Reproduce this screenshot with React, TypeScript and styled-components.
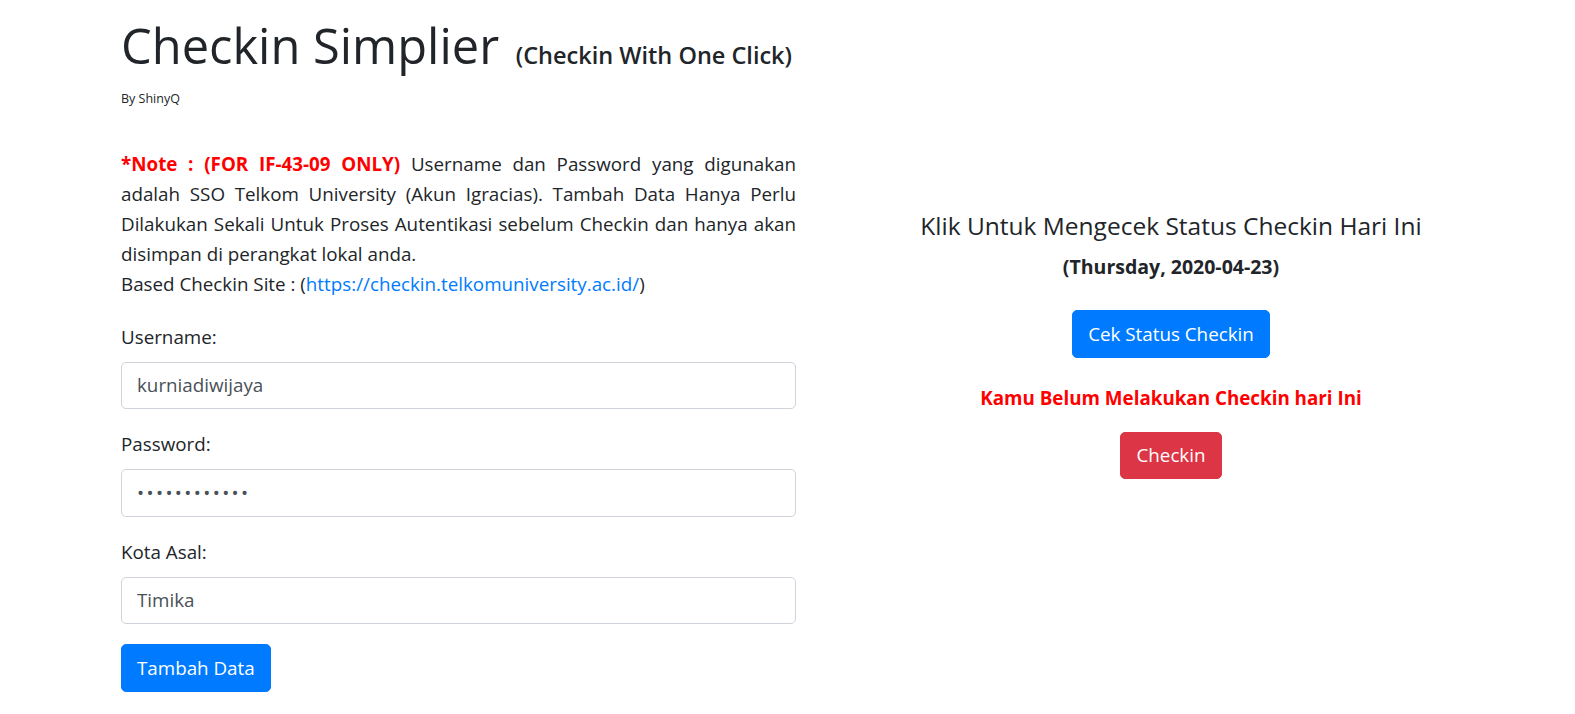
import React from 'react';
import styled, { createGlobalStyle } from 'styled-components';

const GlobalStyle = createGlobalStyle`
  html, body {
    margin: 0;
    padding: 0;
    background: #ffffff;
  }
  body {
    font-family: "Open Sans", "Noto Sans", sans-serif;
    font-size: 18.8px;
    line-height: 30px;
    color: #212529;
  }
  * {
    box-sizing: border-box;
  }
`;

const Page = styled.main`
  padding: 15px 0 0 121px;
`;

const Title = styled.h1`
  margin: 0 0 3px;
  font-size: 48.8px;
  font-weight: 500;
  line-height: 60px;
  color: #212529;
`;

const Subtitle = styled.span`
  font-size: 23.5px;
  font-weight: 600;
  margin-left: 4px;
`;

const Byline = styled.div`
  font-size: 12.5px;
  line-height: 22.5px;
`;

const Row = styled.div`
  display: flex;
  gap: 37.5px;
  margin-top: 38px;
`;

const Column = styled.section`
  width: 675px;
  flex: none;
`;

const StatusColumn = styled(Column)`
  display: flex;
  flex-direction: column;
  align-items: center;
  padding-top: 62px;
  text-align: center;
`;

const Note = styled.div`
  margin-bottom: 23px;
`;

const NoteLine = styled.div<{ $justify?: boolean }>`
  white-space: nowrap;
  text-align: justify;
  text-align-last: ${(p) => (p.$justify ? 'justify' : 'left')};
`;

const Alert = styled.strong`
  color: #ff0000;
  font-weight: 700;
`;

const Link = styled.a`
  color: #007bff;
  text-decoration: none;
`;

const Group = styled.div`
  margin-bottom: 20px;
`;

const Label = styled.label`
  display: block;
  margin-bottom: 10px;
`;

const Input = styled.input`
  display: block;
  width: 100%;
  height: 47.5px;
  padding: 7.5px 15px;
  font-family: inherit;
  font-size: 18.8px;
  line-height: 30px;
  color: #495057;
  background: #fff;
  border: 1px solid #ced4da;
  border-radius: 5px;
  outline: none;

  &[type='password'] {
    letter-spacing: 2.4px;
  }
`;

const Button = styled.button<{ $variant?: 'primary' | 'danger' }>`
  display: inline-block;
  height: 47.5px;
  padding: 7.5px 15px;
  font-family: inherit;
  font-size: 18.8px;
  line-height: 30px;
  color: #fff;
  background: ${(p) => (p.$variant === 'danger' ? '#dc3545' : '#007bff')};
  border: 1px solid ${(p) => (p.$variant === 'danger' ? '#dc3545' : '#007bff')};
  border-radius: 5px;
  cursor: pointer;
`;

const StatusTitle = styled.h5`
  margin: 0 0 14px;
  font-size: 24.5px;
  font-weight: 500;
  line-height: 30px;
`;

const StatusDate = styled.h6`
  margin: 0 0 31.5px;
  font-size: 19.5px;
  font-weight: 700;
  line-height: 24px;
`;

const StatusMessage = styled.div`
  margin: 25.5px 0 18.5px;
  color: #ff0000;
  font-weight: 700;
`;

export default function App() {
  return (
    <>
      <GlobalStyle />
      <Page>
        <Title>
          Checkin Simplier <Subtitle>(Checkin With One Click)</Subtitle>
        </Title>
        <Byline>By ShinyQ</Byline>
        <Row>
          <Column>
            <Note>
              <NoteLine $justify>
                <Alert>*Note : (FOR IF-43-09 ONLY)</Alert> Username dan Password yang digunakan
              </NoteLine>
              <NoteLine $justify>
                adalah SSO Telkom University (Akun Igracias). Tambah Data Hanya Perlu
              </NoteLine>
              <NoteLine $justify>
                Dilakukan Sekali Untuk Proses Autentikasi sebelum Checkin dan hanya akan
              </NoteLine>
              <NoteLine>disimpan di perangkat lokal anda.</NoteLine>
              <NoteLine>
                Based Checkin Site : (
                <Link href="#">https://checkin.telkomuniversity.ac.id/</Link>)
              </NoteLine>
            </Note>
            <Group>
              <Label>Username:</Label>
              <Input type="text" value="kurniadiwijaya" readOnly />
            </Group>
            <Group>
              <Label>Password:</Label>
              <Input type="password" value="kurniadiwija" readOnly />
            </Group>
            <Group>
              <Label>Kota Asal:</Label>
              <Input type="text" value="Timika" readOnly />
            </Group>
            <Button>Tambah Data</Button>
          </Column>
          <StatusColumn>
            <StatusTitle>Klik Untuk Mengecek Status Checkin Hari Ini</StatusTitle>
            <StatusDate>(Thursday, 2020-04-23)</StatusDate>
            <Button>Cek Status Checkin</Button>
            <StatusMessage>Kamu Belum Melakukan Checkin hari Ini</StatusMessage>
            <Button $variant="danger">Checkin</Button>
          </StatusColumn>
        </Row>
      </Page>
    </>
  );
}
